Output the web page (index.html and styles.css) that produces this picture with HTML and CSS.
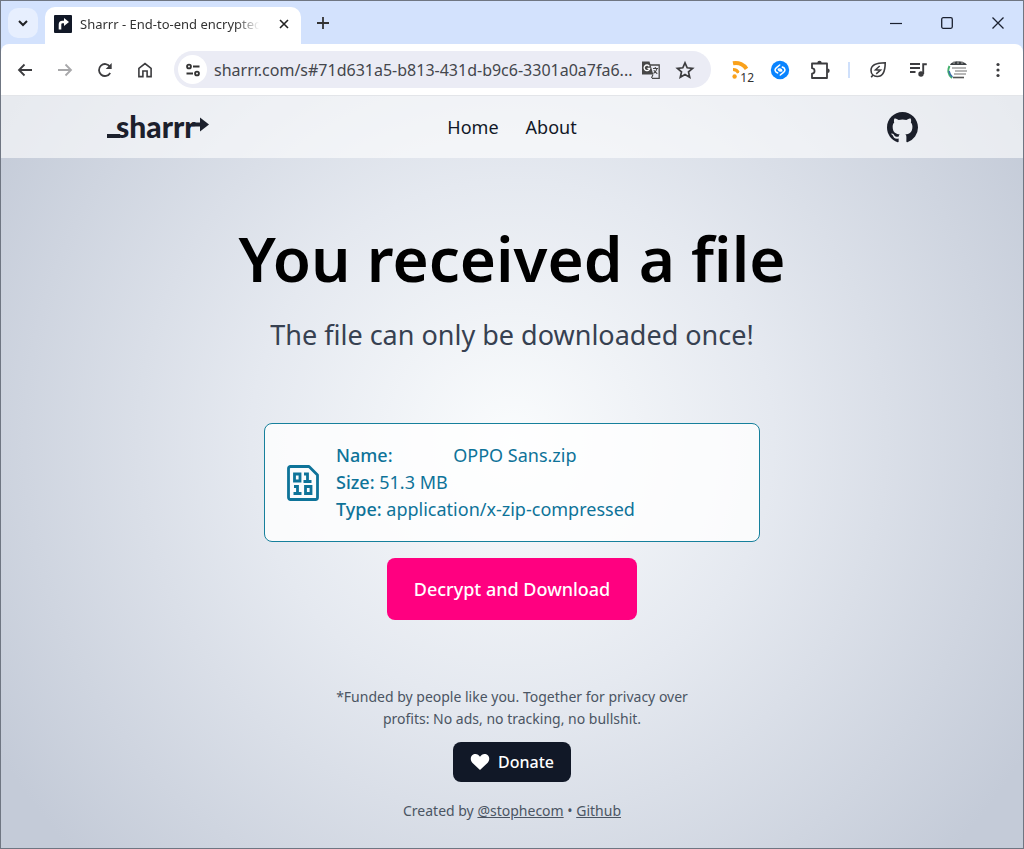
FILE: index.html
```html
<!DOCTYPE html>
<html lang="en">
<head>
    <meta charset="UTF-8">
    <meta name="viewport" content="width=device-width, initial-scale=1.0">
    <title>Sharrr - End-to-end encrypted</title>
    <link rel="stylesheet" href="styles.css">
</head>
<body>
    <div class="window">
        <!-- Tab strip -->
        <div class="tab-strip">
            <button class="tab-search" aria-label="Search tabs">
                <svg width="18" height="18" viewBox="0 0 18 18"><path d="M5 7l4 4 4-4" fill="none" stroke="currentColor" stroke-width="2"/></svg>
            </button>
            <div class="tab">
                <svg class="favicon" width="18" height="18" viewBox="0 0 18 18">
                    <rect width="18" height="18" rx="1" fill="#111827"/>
                    <path d="M6 14.500V9.500Q6 7 8.500 7H11" fill="none" stroke="#fff" stroke-width="2.600"/>
                    <path d="M10 3l5 4-5 4z" fill="#fff"/>
                </svg>
                <span class="tab-title">Sharrr - End-to-end encrypted</span>
                <button class="tab-close" aria-label="Close tab">
                    <svg width="10" height="10" viewBox="0 0 10 10"><path d="M1 1l8 8M9 1L1 9" stroke="currentColor" stroke-width="1.600"/></svg>
                </button>
            </div>
            <button class="tab-new" aria-label="New tab">
                <svg width="12" height="12" viewBox="0 0 12 12"><path d="M6 0v12M0 6h12" stroke="currentColor" stroke-width="1.800"/></svg>
            </button>
            <div class="window-controls">
                <button aria-label="Minimize"><svg width="12" height="12" viewBox="0 0 12 12"><path d="M0 6.500h12" stroke="currentColor" stroke-width="1.200"/></svg></button>
                <button aria-label="Maximize"><svg width="12" height="12" viewBox="0 0 12 12"><rect x=".7" y=".7" width="10.600" height="10.600" rx="1.500" fill="none" stroke="currentColor" stroke-width="1.300"/></svg></button>
                <button aria-label="Close"><svg width="12" height="12" viewBox="0 0 12 12"><path d="M.5.5l11 11M11.500.5l-11 11" stroke="currentColor" stroke-width="1.300"/></svg></button>
            </div>
        </div>

        <!-- Toolbar -->
        <div class="toolbar">
            <button class="tool" aria-label="Back">
                <svg width="20" height="20" viewBox="0 0 20 20"><path d="M17 10H4.500M9.500 4.500L4 10l5.500 5.500" fill="none" stroke="currentColor" stroke-width="1.800"/></svg>
            </button>
            <button class="tool tool-disabled" aria-label="Forward" disabled>
                <svg width="20" height="20" viewBox="0 0 20 20"><path d="M3 10h12.500M10.500 4.500L16 10l-5.500 5.500" fill="none" stroke="currentColor" stroke-width="1.800"/></svg>
            </button>
            <button class="tool" aria-label="Reload">
                <svg width="20" height="20" viewBox="0 0 20 20"><path d="M15.200 13A6 6 0 1 1 15 6.700" fill="none" stroke="currentColor" stroke-width="1.800"/><path d="M16.700 3v6h-6z" fill="currentColor"/></svg>
            </button>
            <button class="tool" aria-label="Home">
                <svg width="20" height="20" viewBox="0 0 20 20"><path d="M3.900 16.600V8.300L10 3.500l6.100 4.800v8.300h-4V11H7.900v5.600z" fill="none" stroke="currentColor" stroke-width="1.600"/></svg>
            </button>

            <div class="omnibox">
                <button class="site-info" aria-label="Site information">
                    <svg width="18" height="18" viewBox="0 0 18 18" fill="none" stroke="currentColor" stroke-width="1.900"><circle cx="5" cy="5.500" r="1.900"/><path d="M9 5.500h6.500M2.500 12.500H9"/><circle cx="13" cy="12.500" r="1.900"/></svg>
                </button>
                <input class="url" type="text" aria-label="Address" value="sharrr.com/s#71d631a5-b813-431d-b9c6-3301a0a7fa6..." readonly>
                <button class="omni-tool" aria-label="Translate this page">
                    <svg width="20" height="20" viewBox="0 0 20 20">
                        <path d="M8 5h10.200v13.300H11" fill="none" stroke="#474747" stroke-width="1.300"/>
                        <path d="M1 1.500h7.500l3.800 13H1z" fill="#474747"/>
                        <path d="M8.300 6.300A2.800 2.800 0 1 0 8.700 8.300H6.400" fill="none" stroke="#fff" stroke-width="1.300"/>
                        <path d="M12 8.500h5M14.300 7v1.500M16 8.500c-.4 2-1.800 3.700-3.500 5M12.800 10.300c.8 1.400 2 2.400 3.500 3.400M12 14.500l-1.500 3.500" fill="none" stroke="#474747" stroke-width="1.100"/>
                    </svg>
                </button>
                <button class="omni-tool" aria-label="Bookmark this tab">
                    <svg width="20" height="20" viewBox="0 0 20 20"><path d="M10 2.800l2.200 5 5.400.5-4.100 3.600 1.200 5.300-4.700-2.800-4.700 2.800 1.200-5.300-4.100-3.600 5.400-.5z" fill="none" stroke="currentColor" stroke-width="1.700"/></svg>
                </button>
            </div>

            <button class="tool tool-feed" aria-label="Feeds">
                <svg width="18" height="20" viewBox="0 0 18 20">
                    <path d="M2 3.200C8 2 13 5 15.500 8.800" fill="none" stroke="#f9a11b" stroke-width="4"/>
                    <path d="M2 9.500c2.600 0 4.500 1 5.500 3.500" fill="none" stroke="#f9a11b" stroke-width="3"/>
                    <circle cx="3.600" cy="16.500" r="2.200" fill="#f9a11b"/>
                </svg>
                <span class="badge">12</span>
            </button>
            <button class="tool" aria-label="Shazam">
                <svg width="20" height="20" viewBox="0 0 20 20">
                    <circle cx="10" cy="10" r="9.200" fill="#0a84ff"/>
                    <path d="M7.600 12.900C4.800 12.300 4.300 9.300 6.200 7.800L9.700 5M8.300 9.200c.3 1.500 1.900 2.300 3.200 1.500M12.400 7.100c2.800.6 3.300 3.600 1.400 5.100L10.300 15M11.700 10.800c-.3-1.500-1.900-2.300-3.200-1.500" fill="none" stroke="#fff" stroke-width="1.600" stroke-linecap="round"/>
                </svg>
            </button>
            <button class="tool" aria-label="Extensions">
                <svg width="20" height="20" viewBox="0 0 20 20"><path d="M2 3.500h15V18H2v-4.300c3.400-.4 3.400-5.100 0-5.500z" fill="none" stroke="currentColor" stroke-width="1.800" stroke-linejoin="round"/><path d="M7.300 3a2.200 2.200 0 0 1 4.400 0zM17.500 8.500a2.200 2.200 0 0 1 0 4.400z" fill="currentColor"/></svg>
            </button>
            <span class="divider"></span>
            <button class="tool" aria-label="Energy saver">
                <svg width="20" height="20" viewBox="0 0 20 20" fill="none" stroke="currentColor" stroke-width="1.600"><path d="M17.200 2.700C12 2.700 3 3 3 10.300c0 3.700 2.600 6.200 6.200 6.200 7.800 0 8-8.800 8-13.800zM3.200 17.300l2-2.500"/><path d="M11.700 6L7.500 9.800l5 .4-4.300 3.600" stroke-width="1.500"/></svg>
            </button>
            <button class="tool" aria-label="Media controls">
                <svg width="20" height="20" viewBox="0 0 20 20"><path d="M2 4h10M2 8h10M2 12h5.500M15.200 14V4.200h3.600" fill="none" stroke="currentColor" stroke-width="1.900"/><circle cx="13" cy="14" r="2.700" fill="currentColor"/></svg>
            </button>
            <button class="tool" aria-label="Profile">
                <svg width="22" height="20" viewBox="0 0 22 20">
                    <path d="M3 5C5 0 17 0 20 5z" fill="#3c4043"/>
                    <path d="M7 1v3M11 1v3M15 1v3" stroke="#aaa" stroke-width="1"/>
                    <path d="M2.500 6C.5 10 1 15 5 18" fill="none" stroke="#43b06c" stroke-width="2"/>
                    <path d="M2 11c.5 2.500 1.500 4.500 3.500 6" fill="none" stroke="#3a6ea8" stroke-width="1.500"/>
                    <path d="M5 8h14M8 11h12M7 14h12" stroke="#a0a0a0" stroke-width="1.300"/>
                    <path d="M6 17.500h11" stroke="#555" stroke-width="1.600"/>
                </svg>
            </button>
            <button class="tool" aria-label="Menu">
                <svg width="20" height="20" viewBox="0 0 20 20" fill="currentColor"><circle cx="10" cy="4.500" r="1.600"/><circle cx="10" cy="10" r="1.600"/><circle cx="10" cy="15.500" r="1.600"/></svg>
            </button>
        </div>

        <!-- Page -->
        <div class="page">
            <header class="header">
                <div class="header-inner">
                    <a class="logo" href="#" aria-label="sharrr">
                        <svg width="104" height="44" viewBox="0 0 104 44">
                            <path d="M1 31h13" fill="none" stroke="#1c202c" stroke-width="4"/>
                            <text class="logo-text" x="10" y="33">sharrr</text>
                            <path d="M86 19.500h10" fill="none" stroke="#1c202c" stroke-width="4"/>
                            <path d="M94 12.500l9 7-9 7z" fill="#1c202c"/>
                        </svg>
                    </a>
                    <nav class="nav">
                        <a href="#">Home</a>
                        <a href="#">About</a>
                    </nav>
                    <a class="github" href="#" aria-label="Github">
                        <svg width="31" height="31" viewBox="0 0 16 16"><path fill="#1b1f2a" d="M8 0C3.580 0 0 3.580 0 8c0 3.540 2.290 6.530 5.470 7.590.4.070.55-.17.55-.38 0-.19-.01-.82-.01-1.490-2.010.37-2.530-.49-2.690-.94-.09-.23-.48-.94-.82-1.130-.28-.15-.68-.52-.01-.53.63-.01 1.080.58 1.230.82.72 1.210 1.870.87 2.330.66.070-.52.28-.87.51-1.070-1.780-.2-3.640-.89-3.640-3.950 0-.87.31-1.590.82-2.150-.08-.2-.36-1.020.08-2.120 0 0 .67-.21 2.200.82.64-.18 1.320-.27 2-.27s1.360.09 2 .27c1.530-1.040 2.200-.82 2.200-.82.44 1.100.16 1.920.08 2.120.51.56.82 1.270.82 2.150 0 3.070-1.870 3.750-3.650 3.950.29.25.54.73.54 1.480 0 1.070-.01 1.930-.01 2.200 0 .21.15.46.55.38A8.010 8.010 0 0 0 16 8c0-4.420-3.580-8-8-8z"/></svg>
                    </a>
                </div>
            </header>

            <main class="main">
                <h1>You received a file</h1>
                <p class="subtitle">The file can only be downloaded once!</p>

                <section class="file-card">
                    <svg class="file-icon" width="32" height="36" viewBox="0 0 32 36" fill="none" stroke="currentColor" stroke-width="2.800">
                        <path d="M3.500 1.500H22L30.500 10V32.500a2 2 0 0 1-2 2H3.500a2 2 0 0 1-2-2V3.500a2 2 0 0 1 2-2z" stroke-linejoin="round"/>
                        <path d="M7.500 9h5.500v7H7.500zM17 9h3.500v8.500M16.500 16.500h8M7 21.500h3.500v7M6.500 28.500h8M18.500 21.500H24v7h-5.500z"/>
                    </svg>
                    <ul class="file-info">
                        <li><b>Name:</b> <span class="file-name">OPPO Sans.zip</span></li>
                        <li><b>Size:</b> 51.3 MB</li>
                        <li><b>Type:</b> application/x-zip-compressed</li>
                    </ul>
                </section>

                <button class="download">Decrypt and Download</button>
            </main>

            <footer class="footer">
                <p class="funded">*Funded by people like you. Together for privacy over profits: No ads, no tracking, no bullshit.</p>
                <button class="donate">
                    <svg width="20" height="18" viewBox="0 0 20 18"><path d="M10 17L2.300 9.700C-.3 7 .5 2.500 3.700 1.300 6.200.4 8.700 1.500 10 3.800c1.300-2.300 3.800-3.400 6.300-2.500 3.200 1.200 4 5.700 1.400 8.400z" fill="#fff"/></svg>
                    Donate
                </button>
                <p class="credits">Created by <a href="#">@stophecom</a> • <a href="#">Github</a></p>
            </footer>
        </div>
    </div>
</body>
</html>
```

FILE: styles.css
```css
* {
    box-sizing: border-box;
}

body {
    margin: 0;
    font-family: "Noto Sans", "Open Sans", sans-serif;
    color: #111827;
}

button {
    display: flex;
    align-items: center;
    justify-content: center;
    padding: 0;
    border: 0;
    background: none;
    color: inherit;
    font-family: inherit;
}

h1, p, ul {
    margin: 0;
    padding: 0;
}

.window {
    display: flex;
    flex-direction: column;
    min-height: 100vh;
    border: 1px solid #6f7682;
    background: #d3e2fd;
}

/* Tab strip */
.tab-strip {
    display: flex;
    align-items: center;
    height: 43px;
    padding-left: 7px;
}

.tab-search {
    width: 30px;
    height: 30px;
    border-radius: 10px;
    background: #e7effe;
    color: #202124;
}

.tab {
    display: flex;
    align-items: center;
    align-self: flex-end;
    width: 256px;
    height: 37px;
    margin-left: 7px;
    padding: 0 7px 4px 9px;
    border-radius: 10px 10px 0 0;
    background: #fff;
}

.favicon {
    flex: none;
}

.tab-title {
    flex: 1;
    min-width: 0;
    margin-left: 8px;
    overflow: hidden;
    white-space: nowrap;
    font-size: 13px;
    color: #333;
    mask-image: linear-gradient(to right, #000 85%, transparent 98%);
}

.tab-close {
    width: 20px;
    height: 20px;
    margin-left: 11px;
    color: #222;
}

.tab-new {
    width: 30px;
    height: 30px;
    margin-left: 7px;
    color: #333;
}

.window-controls {
    display: flex;
    margin-left: auto;
}

.window-controls button {
    width: 51px;
    height: 42px;
    color: #1b2130;
}

/* Toolbar */
.toolbar {
    display: flex;
    align-items: center;
    height: 51px;
    padding: 0 5px 0 4px;
    border-radius: 8px 8px 0 0;
    background: #fff;
}

.tool {
    position: relative;
    flex: none;
    width: 40px;
    height: 36px;
    color: #3c3c3f;
}

.tool-disabled {
    color: #a8a8aa;
}

.tool-feed {
    margin-left: 9px;
}

.badge {
    position: absolute;
    right: 5px;
    bottom: 4px;
    padding: 0 1px;
    background: #fff;
    font-size: 12px;
    line-height: 12px;
    color: #333;
}

.omnibox {
    display: flex;
    flex: 1;
    align-items: center;
    min-width: 0;
    height: 37px;
    margin-left: 9px;
    padding: 0 9px 0 4px;
    border-radius: 19px;
    background: #ebecf5;
}

.site-info {
    flex: none;
    width: 29px;
    height: 29px;
    border-radius: 50%;
    background: #fff;
    color: #333;
}

.url {
    flex: 1;
    min-width: 0;
    margin-left: 7px;
    padding: 0;
    border: 0;
    background: none;
    outline: 0;
    font: 16px "Noto Sans", "Open Sans", sans-serif;
    color: #44464c;
}

.omni-tool {
    flex: none;
    width: 34px;
    height: 30px;
    color: #3c3c3f;
}

.divider {
    width: 2px;
    height: 16px;
    margin: 0 8px;
    background: #cfe0fb;
}

/* Page */
.page {
    display: flex;
    flex: 1;
    flex-direction: column;
    background: radial-gradient(circle at 50% 46%, #fafcfd 0, #e5e9f0 40%, #c4cbd8 92%);
}

.header {
    border-top: 1px solid #e3e5e9;
    background: rgba(255, 255, 255, 0.6);
}

.header-inner {
    display: grid;
    grid-template-columns: 1fr auto 1fr;
    align-items: center;
    max-width: 812px;
    height: 62px;
    margin: 0 auto;
}

.logo,
.github {
    display: flex;
}

.github {
    justify-self: end;
}

.logo-text {
    font: 900 30px Lato, sans-serif;
    fill: #1c202c;
}

.nav {
    display: flex;
    gap: 27px;
}

.nav a {
    font-size: 18px;
    color: #111827;
    text-decoration: none;
}

.main {
    display: flex;
    flex-direction: column;
    align-items: center;
    padding: 60px 16px 0;
}

h1 {
    font-size: 62px;
    font-weight: 600;
    line-height: 80px;
    color: #000;
}

.subtitle {
    margin-top: 19px;
    font-size: 27px;
    line-height: 36px;
    color: #374151;
}

.file-card {
    display: flex;
    align-items: center;
    width: 100%;
    max-width: 496px;
    margin-top: 70px;
    padding: 18px 22px;
    border: 1px solid #16809c;
    border-radius: 8px;
    background: rgba(255, 255, 255, 0.8);
    color: #0e7399;
}

.file-icon {
    flex: none;
    margin-right: 17px;
}

.file-info {
    list-style: none;
    font-size: 18px;
    line-height: 27px;
}

.file-info b {
    font-weight: 500;
}

.file-name {
    margin-left: 56px;
}

.download {
    height: 62px;
    margin-top: 16px;
    padding: 0 27px;
    border-radius: 8px;
    background: #ff0080;
    color: #fff;
    font-size: 18px;
    font-weight: 500;
}

.footer {
    display: flex;
    flex-direction: column;
    align-items: center;
    margin-top: auto;
    padding: 48px 16px 26px;
    text-align: center;
    font-size: 14px;
    line-height: 22px;
    color: #4b5563;
}

.funded {
    max-width: 384px;
}

.donate {
    gap: 8px;
    height: 40px;
    margin: 12px 0 18px;
    padding: 0 17px;
    border-radius: 8px;
    background: #111827;
    color: #fff;
    font-size: 16px;
    font-weight: 500;
}

.credits a {
    color: inherit;
}
```
